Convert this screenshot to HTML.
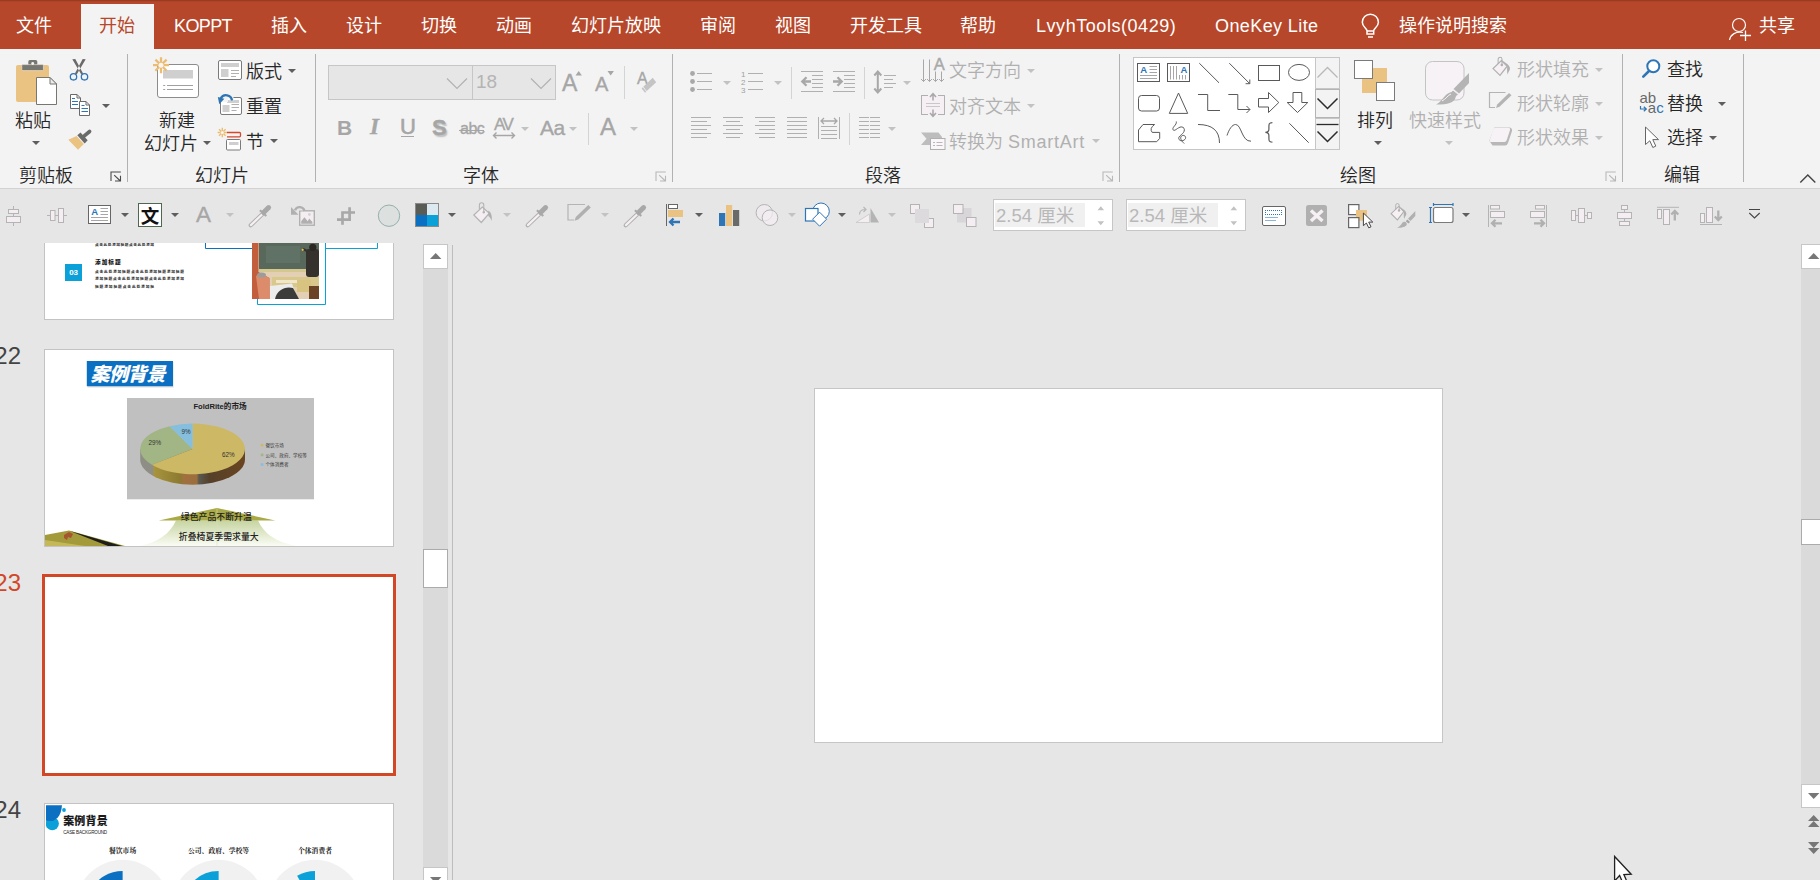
<!DOCTYPE html>
<html lang="zh-CN">
<head>
<meta charset="utf-8">
<title>PowerPoint</title>
<style>
*{box-sizing:border-box;margin:0;padding:0}
html,body{width:1820px;height:880px;overflow:hidden;background:#e6e6e6}
body{position:relative;font-weight:350;font-family:"Liberation Sans","Noto Sans CJK SC",sans-serif;font-size:18px;color:#262626}
.abs{position:absolute}
#tabbar{position:absolute;left:0;top:0;width:1820px;height:49px;background:#b7472a}
#tabbar:before{content:"";position:absolute;left:0;top:0;width:100%;height:2px;background:linear-gradient(#8e3720,#b7472a)}
.tab{position:absolute;top:9px;height:34px;line-height:34px;color:#fff;font-size:18px;white-space:nowrap;font-weight:400}
#tab-home{position:absolute;left:81px;top:4px;width:73px;height:45px;background:#f3f3f3}
#tab-home span{position:absolute;left:18px;top:5px;line-height:34px;color:#b7472a;font-size:18px;font-weight:400}
#ribbon{position:absolute;left:0;top:49px;width:1820px;height:140px;background:#f3f3f3;border-bottom:1px solid #d2d2d2}
.sep{position:absolute;top:54px;width:1px;height:128px;background:#b1b1b1}
.tsep{position:absolute;width:1px;background:#d4d4d4}
.t{position:absolute;white-space:nowrap;line-height:24px;font-size:18px;color:#262626}
.g{color:#b0b0b0}
.glabel{position:absolute;top:113px;white-space:nowrap;line-height:24px;font-size:18px;color:#262626}
.gl{color:#a6a6a6;white-space:nowrap;-webkit-text-stroke:0.35px #a6a6a6}
.dd{position:absolute;width:0;height:0;border-left:4px solid transparent;border-right:4px solid transparent;border-top:4px solid #5e5e5e}
.dd.g{border-top-color:#c2c2c2}
svg{position:absolute;overflow:visible}
.pg{position:absolute;width:1820px;height:880px}
.num{position:absolute;left:-20px;width:41px;text-align:right;font-size:24px;line-height:28px;color:#444;font-weight:400;white-space:nowrap}
.thumb{position:absolute;left:44px;width:350px;background:#fff;border:1px solid #c3c3c3;overflow:hidden}
.sbtn{position:absolute;width:25px;height:24px;background:#fff;border:1px solid #c6c6c6}
.strack{position:absolute;width:25px;background:#dadada}
#qat{position:absolute;left:0;top:189px;width:1820px;height:54px;background:#e6e6e6}
#left{position:absolute;left:0;top:243px;width:453px;height:637px;background:#e6e6e6;overflow:hidden}
#main{position:absolute;left:453px;top:243px;width:1367px;height:637px;background:#e6e6e6;overflow:hidden}
</style>
</head>
<body>
<div id="tabbar">
<div id="tab-home"><span>开始</span></div>
<div class="tab" style="left:16px">文件</div>
<div class="tab" style="left:174px;letter-spacing:-0.600px">KOPPT</div>
<div class="tab" style="left:271px">插入</div>
<div class="tab" style="left:346px">设计</div>
<div class="tab" style="left:421px">切换</div>
<div class="tab" style="left:496px">动画</div>
<div class="tab" style="left:571px">幻灯片放映</div>
<div class="tab" style="left:700px">审阅</div>
<div class="tab" style="left:775px">视图</div>
<div class="tab" style="left:850px">开发工具</div>
<div class="tab" style="left:960px">帮助</div>
<div class="tab" style="left:1036px;letter-spacing:0.550px">LvyhTools(0429)</div>
<div class="tab" style="left:1215px;letter-spacing:0.400px">OneKey Lite</div>
<div class="tab" style="left:1399px">操作说明搜索</div>
<div class="tab" style="left:1759px">共享</div>
<svg style="left:1360px;top:12px" width="22" height="28" viewBox="1360 12 22 28"><path d="M1367 34v-3.200c0-2.300-4.700-4-4.700-8.600a8.050 8.050 0 0 1 16.100 0c0 4.600-4.700 6.300-4.700 8.600V34z" fill="none" stroke="#fff" stroke-width="1.500"/><path d="M1367 31h6.700M1368 37h5" stroke="#fff" stroke-width="1.500"/></svg>
<svg style="left:1727px;top:16px" width="26" height="27" viewBox="1727 16 26 27"><circle cx="1739" cy="25" r="6.500" fill="none" stroke="#fff" stroke-width="1.200"/><path d="M1729.500 40c1-5.500 6.500-9 13.500-7.500" fill="none" stroke="#fff" stroke-width="1.200"/><path d="M1740 35.500h11M1745.500 30.500v10.500" stroke="#fff" stroke-width="1.300"/></svg>

</div>
<div id="ribbon"></div>
<div id="qat"></div>
<div id="rl" style="position:absolute;left:0;top:0;width:1820px;height:243px">
<!-- ===== Clipboard group ===== -->
<svg style="left:14px;top:58px" width="46" height="50" viewBox="14 58 46 50">
<rect x="16" y="65" width="33" height="37" rx="2" fill="#eac282"/>
<rect x="28.300" y="60.100" width="9" height="7" rx="1.600" fill="#777772"/>
<rect x="21.800" y="64.600" width="21.600" height="6" rx="1" fill="#777772" stroke="#f3ead8" stroke-width="0.600"/>
<circle cx="32.700" cy="63.500" r="1.400" fill="#f3f3f3"/>
<path d="M36.500 77.500h13.500l6.500 6.500v20.500h-20z" fill="#fff" stroke="#777772" stroke-width="1"/>
<path d="M50 77.500v6.500h6.500z" fill="#ececec" stroke="#777772" stroke-width="1" stroke-linejoin="round"/>
</svg>
<div class="t" style="left:15px;top:109px">粘贴</div>
<div class="dd" style="left:32px;top:141px"></div>
<!-- scissors -->
<svg style="left:68px;top:58px" width="24" height="24" viewBox="68 58 24 24">
<path d="M72.300 59.300l3-0.300 7.800 14.500-1.800 1zM85.700 59.300l-3-0.300-7.800 14.500 1.800 1z" fill="#6a6a6a"/>
<circle cx="73.500" cy="76.800" r="3.200" fill="none" stroke="#2f75b5" stroke-width="1.300"/>
<circle cx="84.500" cy="76.800" r="3.200" fill="none" stroke="#2f75b5" stroke-width="1.300"/>
</svg>
<!-- copy -->
<svg style="left:68px;top:92px" width="26" height="26" viewBox="68 92 26 26">
<path d="M70.500 94.500h6.500l3.500 3.500v10.500h-10z" fill="#fff" stroke="#6a6a6a"/>
<path d="M77 94.500v3.500h3.500" fill="none" stroke="#6a6a6a"/>
<path d="M72 98.500h3M72 101.500h6M72 104.500h6" stroke="#2f75b5" stroke-width="1"/>
<path d="M79.500 101.500h6.500l3.500 3.500v10.500h-10z" fill="#fff" stroke="#6a6a6a"/>
<path d="M86 101.500v3.500h3.500" fill="none" stroke="#6a6a6a"/>
<path d="M81.500 105.500h3M81.500 108.500h6.500M81.500 111.500h6.500" stroke="#2f75b5" stroke-width="1"/>
</svg>
<div class="dd" style="left:102px;top:104px"></div>
<!-- format painter -->
<svg style="left:66px;top:128px" width="28" height="24" viewBox="66 128 28 24">
<path d="M68.300 139.800l8.200-3.800 7.300 8-5.800 5.800z" fill="#eac282"/>
<path d="M77.300 135.300l3.200-2.800 7.200 7.700-3 3.300z" fill="#6a6a6a"/>
<path d="M84 136.200l5.600-4.700" stroke="#6a6a6a" stroke-width="3.600" stroke-linecap="round"/>
</svg>
<div class="glabel" style="left:19px;top:164px">剪贴板</div>
<svg class="launch" style="left:110px;top:171px" width="12" height="11" viewBox="0 0 12 11"><path d="M1 10V1h9.800M4.200 4.200l6.200 5.800M10.500 4.800v5.200h-5.500" fill="none" stroke="#4a4a4a" stroke-width="1.100"/></svg>
<div class="sep" style="left:127px"></div>

<!-- ===== Slides group ===== -->
<svg style="left:150px;top:55px" width="52" height="46" viewBox="150 55 52 46">
<rect x="157.500" y="64.500" width="41" height="33" rx="2.500" fill="#fff" stroke="#8c8c8c" stroke-width="1"/>
<rect x="163" y="70" width="30" height="8.500" fill="#cfcfcf"/>
<path d="M163.200 85.500h2M167 85.500h26M163.200 89.500h2M167 89.500h26" stroke="#a0a0a0" stroke-width="1"/>
<g stroke="#ebbd73" stroke-width="2.300" stroke-linecap="butt"><path d="M161 57.200v16M153 65.200h16M155.400 59.600l11.200 11.200M166.600 59.600l-11.200 11.200"/></g>
<circle cx="161" cy="65.200" r="2.500" fill="#fbf4f1"/>
</svg>
<div class="t" style="left:159px;top:109px">新建</div>
<div class="t" style="left:144px;top:132px">幻灯片</div>
<div class="dd" style="left:203px;top:141px"></div>
<!-- layout -->
<svg style="left:217px;top:59px" width="26" height="22" viewBox="217 59 26 22">
<rect x="218.500" y="60.500" width="23" height="19" rx="1.500" fill="#fff" stroke="#7a7a7a"/>
<rect x="221" y="63" width="18" height="4" fill="#cfcfcf"/>
<rect x="221" y="69" width="7.500" height="8" fill="#cfcfcf"/>
<path d="M231 70.500h8M231 73.500h8M231 76.500h5" stroke="#b0b0b0"/>
</svg>
<div class="t" style="left:246px;top:60px">版式</div>
<div class="dd" style="left:288px;top:69px"></div>
<!-- reset -->
<svg style="left:216px;top:93px" width="28" height="24" viewBox="216 93 28 24">
<rect x="220.500" y="97.500" width="21" height="17" rx="1.500" fill="#fff" stroke="#7a7a7a"/>
<rect x="227" y="100" width="12" height="3" fill="#cfcfcf"/>
<rect x="222.500" y="105" width="7" height="7" fill="#cfcfcf"/>
<path d="M231.500 104.500h7.500M231.500 107.500h7.500M231.500 110.500h5" stroke="#b0b0b0"/>
<path d="M217 94h11v8h-11z" fill="#f3f3f3"/>
<path d="M232 100.500a6 6 0 0 0-11.300-2" fill="none" stroke="#f3f3f3" stroke-width="4.500"/>
<path d="M232 100.500a6 6 0 0 0-11.300-2" fill="none" stroke="#2f75b5" stroke-width="2.300"/>
<path d="M217.800 97l6.500 1.800-5 5.400z" fill="#2f75b5"/>
</svg>
<div class="t" style="left:246px;top:95px">重置</div>
<!-- section -->
<svg style="left:216px;top:126px" width="28" height="26" viewBox="216 126 28 26">
<path d="M227 132.500h12.500a1 1 0 0 1 1 1v2.300a1 1 0 0 1-1 1h-12.500" fill="none" stroke="#d9472b" stroke-width="1.300"/>
<rect x="226.500" y="139.500" width="14" height="10.500" rx="1" fill="#fff" stroke="#7a7a7a"/>
<rect x="229" y="142" width="9.500" height="3" fill="#cfcfcf"/>
<g stroke="#ebbd73" stroke-width="1.400"><path d="M222.300 127.800v9.400M217.600 132.500h9.400M219 129.200l6.600 6.600M225.600 129.200l-6.600 6.600"/></g>
<circle cx="222.300" cy="132.500" r="1.600" fill="#fbf4f1"/>
</svg>
<div class="t" style="left:246px;top:130px">节</div>
<div class="dd" style="left:270px;top:139px"></div>
<div class="glabel" style="left:195px;top:164px">幻灯片</div>
<div class="sep" style="left:315px"></div>

<!-- ===== Font group ===== -->
<div class="abs" style="left:328px;top:65px;width:145px;height:35px;background:#e6e6e6;border:1px solid #c6c6c6"></div>
<div class="abs" style="left:472px;top:65px;width:84px;height:35px;background:#e6e6e6;border:1px solid #c6c6c6"></div>
<svg style="left:446px;top:77px" width="22" height="13" viewBox="0 0 22 13"><path d="M1 1.500l10 10 10-10" fill="none" stroke="#b2b2b2" stroke-width="1.200"/></svg>
<svg style="left:530px;top:77px" width="22" height="13" viewBox="0 0 22 13"><path d="M1 1.500l10 10 10-10" fill="none" stroke="#b2b2b2" stroke-width="1.200"/></svg>
<div class="abs" style="left:476px;top:70px;font-size:19px;line-height:24px;color:#b4b4b4;font-weight:400">18</div>
<div class="abs gl" style="left:562px;top:69px;font-size:23px;line-height:28px">A</div>
<svg style="left:575px;top:70px" width="8" height="6" viewBox="0 0 8 6"><path d="M0.500 5.500l3.200-4.500 3.200 4.500z" fill="#a6a6a6"/></svg>
<div class="abs gl" style="left:595px;top:72px;font-size:20px;line-height:24px">A</div>
<svg style="left:607px;top:70px" width="8" height="6" viewBox="0 0 8 6"><path d="M0.500 1l3.200 4.500 3.200-4.500z" fill="#a6a6a6"/></svg>
<div class="tsep" style="left:624px;top:66px;height:33px"></div>
<div class="abs gl" style="left:637px;top:68px;font-size:16px;line-height:22px">A</div>
<svg style="left:640px;top:76px" width="18" height="18" viewBox="640 76 18 18"><path d="M643.300 86.800l9.400-9 3.500 4.500-9.500 8.700z" fill="#c4c4c4"/><path d="M641.600 88.400l1.200-1.100 3.500 4.400-1.200 1.100z" fill="#c4c4c4"/></svg>
<div class="abs gl" style="left:337px;top:114px;font-size:21px;line-height:28px;font-weight:700;-webkit-text-stroke:0">B</div>
<div class="abs gl" style="left:370px;top:113px;font-size:23px;line-height:28px;font-weight:700;font-style:italic;font-family:'Liberation Serif',serif">I</div>
<div class="abs gl" style="left:400px;top:113px;font-size:22px;line-height:28px;font-weight:400;-webkit-text-stroke:0.600px #a6a6a6;letter-spacing:0">U</div>
<div class="abs" style="left:401px;top:136px;width:13px;height:1px;background:#a6a6a6"></div>
<div class="abs gl" style="left:432px;top:114px;font-size:22px;line-height:28px;font-weight:700;text-shadow:1.500px 1.500px 1.500px #bdbdbd">S</div>
<div class="abs gl" style="left:460px;top:117px;font-size:16px;line-height:24px;letter-spacing:-0.500px;font-weight:400">abc</div>
<div class="abs" style="left:459px;top:130px;width:25px;height:1px;background:#a6a6a6"></div>
<div class="abs gl" style="left:494px;top:114px;font-size:17px;line-height:22px;letter-spacing:-1.500px;font-weight:400">AV</div>
<svg style="left:492px;top:131px" width="24" height="9" viewBox="0 0 24 9"><path d="M1.500 4.500h21M4.500 1.500l-3 3 3 3M19.500 1.500l3 3-3 3" fill="none" stroke="#a6a6a6" stroke-width="1.400"/></svg>
<div class="dd g" style="left:521px;top:127px"></div>
<div class="abs gl" style="left:540px;top:115px;font-size:21px;line-height:26px;letter-spacing:-0.500px;font-weight:400">Aa</div>
<div class="dd g" style="left:569px;top:127px"></div>
<div class="tsep" style="left:588px;top:113px;height:32px"></div>
<div class="abs gl" style="left:600px;top:112px;font-size:24px;line-height:30px;font-weight:400">A</div>
<div class="dd g" style="left:630px;top:127px"></div>
<div class="glabel" style="left:463px;top:164px">字体</div>
<svg class="launch" style="left:655px;top:171px" width="12" height="11" viewBox="0 0 12 11"><path d="M1 10V1h9.800M4.200 4.200l6.200 5.800M10.500 4.800v5.200h-5.500" fill="none" stroke="#b8b8b8" stroke-width="1.100"/></svg>
<div class="sep" style="left:672px"></div>

<!-- ===== Paragraph group ===== -->
<svg style="left:688px;top:68px" width="26" height="26" viewBox="688 68 26 26"><circle cx="692.500" cy="73.5" r="2.400" fill="#a8a8a8"/><circle cx="692.500" cy="81.5" r="2.400" fill="#a8a8a8"/><circle cx="692.500" cy="89.5" r="2.400" fill="#a8a8a8"/><path d="M697 73.5H712M697 81.5H712M697 89.5H712" stroke="#b0b0b0" stroke-width="1" fill="none"/></svg>
<div class="dd g" style="left:723px;top:81px"></div>
<svg style="left:738px;top:68px" width="26" height="26" viewBox="738 68 26 26"><text x="741" y="76.5" font-size="8" font-family="Liberation Sans,sans-serif" fill="#a0a0a0">1</text><text x="741" y="84.5" font-size="8" font-family="Liberation Sans,sans-serif" fill="#a0a0a0">2</text><text x="741" y="92.5" font-size="8" font-family="Liberation Sans,sans-serif" fill="#a0a0a0">3</text><path d="M748 73.5H763M748 81.5H763M748 89.5H763" stroke="#b0b0b0" stroke-width="1" fill="none"/></svg>
<div class="dd g" style="left:774px;top:81px"></div>
<div class="tsep" style="left:791px;top:67px;height:32px"></div>
<svg style="left:799px;top:68px" width="26" height="26" viewBox="799 68 26 26"><path d="M801 71.5H823M801 91.5H823M812 75.5H823M812 79.5H823M812 83.5H823M812 87.5H823" stroke="#b0b0b0" stroke-width="1" fill="none"/><path d="M803 81.500h8M806.500 77.300l-4.200 4.200 4.200 4.200" stroke="#a8a8a8" stroke-width="2.300" fill="none"/></svg>
<svg style="left:831px;top:68px" width="26" height="26" viewBox="831 68 26 26"><path d="M833 71.5H855M833 91.5H855M844 75.5H855M844 79.5H855M844 83.5H855M844 87.5H855" stroke="#b0b0b0" stroke-width="1" fill="none"/><path d="M833 81.500h8M837.500 77.300l4.200 4.200-4.200 4.200" stroke="#a8a8a8" stroke-width="2.300" fill="none"/></svg>
<div class="tsep" style="left:864px;top:67px;height:32px"></div>
<svg style="left:872px;top:68px" width="26" height="28" viewBox="872 68 26 28"><path d="M884 75.5H896M884 79.5H893M884 83.5H896M884 87.5H893" stroke="#b0b0b0" stroke-width="1" fill="none"/><path d="M877.800 72v20M874.300 75.500l3.500-4 3.500 4M874.300 88.500l3.500 4 3.500-4" stroke="#a8a8a8" stroke-width="2" fill="none"/></svg>
<div class="dd g" style="left:903px;top:81px"></div>
<svg style="left:689px;top:114px" width="24" height="26" viewBox="689 114 24 26"><path d="M691 117.5H711M691 121.5H707M691 125.5H711M691 129.5H707M691 133.5H711M691 137.5H707" stroke="#b0b0b0" stroke-width="1" fill="none"/></svg>
<svg style="left:721px;top:114px" width="24" height="26" viewBox="721 114 24 26"><path d="M723 117.5H743M726 121.5H740M723 125.5H743M726 129.5H740M723 133.5H743M726 137.5H740" stroke="#b0b0b0" stroke-width="1" fill="none"/></svg>
<svg style="left:753px;top:114px" width="24" height="26" viewBox="753 114 24 26"><path d="M755 117.5H775M759 121.5H775M755 125.5H775M759 129.5H775M755 133.5H775M759 137.5H775" stroke="#b0b0b0" stroke-width="1" fill="none"/></svg>
<svg style="left:785px;top:114px" width="24" height="26" viewBox="785 114 24 26"><path d="M787 117.5H807M787 121.5H807M787 125.5H807M787 129.5H807M787 133.5H807M787 137.5H807" stroke="#b0b0b0" stroke-width="1" fill="none"/></svg>
<svg style="left:816px;top:114px" width="26" height="27" viewBox="816 114 26 27"><path d="M818.500 117v22M839.500 117v22" stroke="#b0b0b0" stroke-width="1"/><path d="M821 121h16M824 118l-3 3 3 3M834 118l3 3-3 3" stroke="#a8a8a8" stroke-width="1.300" fill="none"/><path d="M821 126.5H837M821 130.5H837M821 134.5H837M821 138.5H837" stroke="#b0b0b0" stroke-width="1" fill="none"/></svg>
<div class="tsep" style="left:849px;top:113px;height:32px"></div>
<svg style="left:857px;top:114px" width="26" height="26" viewBox="857 114 26 26"><path d="M859 117.5H869M859 121.5H869M859 125.5H869M859 129.5H869M859 133.5H869M859 137.5H869M870 117.5H880M870 121.5H880M870 125.5H880M870 129.5H880M870 133.5H880M870 137.5H880" stroke="#b0b0b0" stroke-width="1" fill="none"/></svg>
<div class="dd g" style="left:888px;top:127px"></div>
<svg style="left:920px;top:57px" width="28" height="27" viewBox="920 57 28 27"><path d="M923.500 59.500v22M929.500 59.500v22M935.500 71.500v10M941.500 71.500v10" stroke="#a8a8a8" stroke-width="1"/><path d="M921 79l2.500 2.500 2.500-2.500" stroke="#a8a8a8" stroke-width="1" fill="none"/><path d="M927.0 79l2.500 2.500 2.500-2.500" stroke="#a8a8a8" stroke-width="1" fill="none"/><path d="M933.0 79l2.500 2.500 2.500-2.500" stroke="#a8a8a8" stroke-width="1" fill="none"/><path d="M939.0 79l2.500 2.500 2.500-2.500" stroke="#a8a8a8" stroke-width="1" fill="none"/><text x="933.800" y="70" font-size="16.500" font-family="Liberation Sans,sans-serif" fill="#a8a8a8" stroke="#a8a8a8" stroke-width="0.400">A</text></svg>
<div class="t g" style="left:949px;top:59px">文字方向</div>
<div class="dd g" style="left:1027px;top:69px"></div>
<svg style="left:920px;top:92px" width="27" height="26" viewBox="920 92 27 26"><path d="M928 95.500h-6.500v19h6.500M938 95.500h6.500v19h-6.500" fill="#f6f0f4" stroke="#b0b0b0" stroke-width="1"/><rect x="922" y="96" width="22" height="18" fill="#f6f0f4"/><path d="M928 95.500h-6.500v19h6.500M938 95.500h6.500v19h-6.500" fill="none" stroke="#b0b0b0" stroke-width="1"/><path d="M933 94v6.500M930 97l3-3.300 3 3.300M933 109.500v6.500M930 113l3 3.300 3-3.300" stroke="#a8a8a8" stroke-width="1.500" fill="none"/><path d="M926 103.5H940M926 106.5H940" stroke="#c8c8c8" stroke-width="1" fill="none"/></svg>
<div class="t g" style="left:949px;top:95px">对齐文本</div>
<div class="dd g" style="left:1027px;top:104px"></div>
<svg style="left:920px;top:131px" width="27" height="20" viewBox="920 131 27 20"><path d="M921 132.500h17.500l3.500 4.500v8h-21l5.500-6.300z" fill="#bdbdbd"/><rect x="930.500" y="138.500" width="14.500" height="11" fill="#faf6f9" stroke="#b0b0b0"/><path d="M933 142.5H935M936.5 142.5H942.5M933 145.5H935M936.5 145.5H942.5" stroke="#b8b8b8" stroke-width="1" fill="none"/></svg>
<div class="t g" style="left:949px;top:130px">转换为 <span style="letter-spacing:0.750px">SmartArt</span></div>
<div class="dd g" style="left:1092px;top:139px"></div>
<div class="glabel" style="left:865px;top:164px">段落</div>
<svg class="launch" style="left:1102px;top:171px" width="12" height="11" viewBox="0 0 12 11"><path d="M1 10V1h9.800M4.200 4.200l6.200 5.800M10.500 4.800v5.200h-5.500" fill="none" stroke="#b8b8b8" stroke-width="1.100"/></svg>
<div class="sep" style="left:1119px"></div>

<!-- ===== Drawing group ===== -->
<div class="abs" style="left:1133px;top:57px;width:207px;height:93px;background:#fff;border:1px solid #c6c6c6"></div>
<div class="abs" style="left:1315px;top:57px;width:25px;height:32px;background:#f3f3f3;border:1px solid #c6c6c6"></div>
<div class="abs" style="left:1315px;top:89px;width:25px;height:29px;background:#f3f3f3;border:1px solid #b4b4b4"></div>
<div class="abs" style="left:1315px;top:118px;width:25px;height:32px;background:#f3f3f3;border:1px solid #c6c6c6"></div>
<svg style="left:1315px;top:57px" width="25" height="93" viewBox="1315 57 25 93"><path d="M1317.500 77.500l10-10 10 10" fill="none" stroke="#b8b8b8" stroke-width="1.300"/><path d="M1317.500 98.500l10 10 10-10" fill="none" stroke="#2b2b2b" stroke-width="1.500"/><path d="M1316.500 124.500h22" fill="none" stroke="#2b2b2b" stroke-width="1.300"/><path d="M1317.500 131.500l10 10 10-10" fill="none" stroke="#2b2b2b" stroke-width="1.500"/></svg>
<svg style="left:1134px;top:58px" width="181" height="91" viewBox="1134 58 181 91"><rect x="1137.500" y="63.500" width="22" height="18" fill="#fff" stroke="#595959"/><text x="1140.300" y="73" font-size="9.500" font-weight="700" font-family="Liberation Sans,sans-serif" fill="#2e75b6">A</text><path d="M1149.500 66.500h7.500M1149.500 69.500h7.500M1149.500 72.500h7.500M1140 75.500h17M1140 78.500h17" stroke="#a6a6a6"/><rect x="1167.500" y="63.500" width="22" height="18" fill="#fff" stroke="#595959"/><text x="1180.500" y="73" font-size="9.500" font-weight="700" font-family="Liberation Sans,sans-serif" fill="#2e75b6">A</text><path d="M1170.500 66v13.500M1173.500 66v13.500M1176.500 66v13.500M1179.500 75v4.500M1182.500 75v4.500M1185.500 75v4.500" stroke="#a6a6a6"/><path d="M1199.300 63.200L1219 82.800" stroke="#595959" fill="none"/><path d="M1229.300 63.200L1249.800 83.700M1249.800 79.500v4.200h-4.200" stroke="#595959" fill="none"/><rect x="1258.500" y="65.500" width="21" height="15" fill="none" stroke="#595959"/><ellipse cx="1299" cy="72.400" rx="10.500" ry="8" fill="none" stroke="#595959"/><rect x="1138.500" y="95.500" width="21" height="15.500" rx="3" fill="none" stroke="#595959"/><path d="M1178.500 93l9.200 20.400h-18.400z" fill="none" stroke="#595959"/><path d="M1198 94.500h9.700v16h12.300" fill="none" stroke="#595959"/><path d="M1228.300 94.500h9.500v15h12M1246.500 106l3.500 3.500-3.500 3.500" fill="none" stroke="#595959"/><path d="M1258.500 98.500h10v-6l10.300 10-10.300 10v-5.500h-10z" fill="none" stroke="#595959"/><path d="M1293 92.500h8.800v10h6l-10.300 10-10.300-10h5.800z" fill="none" stroke="#595959"/><path d="M1138.500 130l4.500-5.500h11.600q-5.500 4 -2.400 7.900h7.500v6l-3 3.300h-18.200z" fill="none" stroke="#595959"/><path d="M1176.300 121.500C1177 125 1172 127 1173 129.500C1174 132.500 1178 127 1181.200 126.900C1184 127 1185 129 1184 131.500C1183 134.500 1178 136 1178.800 138.800C1179.500 141.500 1184 141.500 1185.500 138.500C1186.300 136 1183.500 134.500 1181.500 136C1179.500 138 1181.500 141 1184.200 143.500" fill="none" stroke="#595959"/><path d="M1198 124.500q21.500 0 21.500 18.500" fill="none" stroke="#595959"/><path d="M1227 135.500c2-6 5-11 8.600-11 6 0 6 17.200 15.400 16.700" fill="none" stroke="#595959"/><path d="M1272.400 122.700c-3.500 0-3.500 1.500-3.500 4v2.500c0 2-1 3-3.500 3.200 2.500 0.200 3.500 1.200 3.500 3.200v2.500c0 2.500 0 4 3.500 4" fill="none" stroke="#595959" stroke-width="1.200"/><path d="M1289.400 123.300L1308.700 142.700" stroke="#595959" fill="none"/></svg>
<svg style="left:1353px;top:59px" width="44" height="44" viewBox="1353 59 44 44"><rect x="1362" y="68" width="25" height="25" fill="#eac282"/><rect x="1354.500" y="60.500" width="18" height="18" fill="#fff" stroke="#7a7a7a"/><rect x="1376.500" y="82.500" width="18" height="18" fill="#fff" stroke="#7a7a7a"/></svg>
<div class="t" style="left:1357px;top:109px">排列</div>
<div class="dd" style="left:1374px;top:141px"></div>
<svg style="left:1424px;top:60px" width="48" height="46" viewBox="1424 60 48 46"><rect x="1425.500" y="61.500" width="38.500" height="38.500" rx="7" fill="#f6f2f5" stroke="#c4c4c4"/><path d="M1469 73v10l-10 10.500-5.500-4.500z" fill="#b4b4b4"/><path d="M1453 90l5.300 4.300-3 3.200-5.300-4.300z" fill="#b4b4b4" stroke="#f6f2f5" stroke-width="1"/><path d="M1436 104.500c6-3 8-10 14-12 4-1 7 3 5 6.500-2 3.500-6 5.500-19 5.500z" fill="#b4b4b4"/><path d="M1442 101c4-2 6-6 9-7" fill="none" stroke="#f6f2f5" stroke-width="1"/></svg>
<div class="t g" style="left:1409px;top:109px">快速样式</div>
<div class="dd g" style="left:1445px;top:141px"></div>
<svg style="left:1491px;top:56px" width="22" height="22" viewBox="1491 56 22 22"><g transform="translate(1492.5 57.4) scale(0.94)"><path d="M9.500 3.300l6.100 6.100-7.600 9.800-7.400-7.300z" fill="#f6f0f4" stroke="#b0b0b0" stroke-width="1.300"/><path d="M6 7v-5a2.050 2.050 0 0 1 4.100 0v6" fill="none" stroke="#b0b0b0" stroke-width="1.100"/><circle cx="9.900" cy="8.100" r="1.400" fill="#b0b0b0"/><path d="M10.700 3.300L16 7.400C18 9 18.800 11 18.500 12.500C18 14.500 16.500 16 16 18.200C15.300 15 15.500 12 15.600 9.800z" fill="#b0b0b0"/></g></svg>
<div class="t g" style="left:1517px;top:58px">形状填充</div>
<div class="dd g" style="left:1595px;top:68px"></div>
<svg style="left:1488px;top:91px" width="25" height="19" viewBox="1488 91 25 19"><path d="M1505.500 92.500h-16v15h5.500" fill="none" stroke="#b4b4b4" stroke-width="1.200"/><path d="M1509 93l2.500 2.300-12 11.500-3.500 1.200 1.200-3.500z" fill="#b4b4b4"/></svg>
<div class="t g" style="left:1517px;top:92px">形状轮廓</div>
<div class="dd g" style="left:1595px;top:102px"></div>
<svg style="left:1488px;top:126px" width="26" height="22" viewBox="1488 126 26 22"><path d="M1494.500 127.500h14.500q3.500 0 3 3.500l-4 12q-0.800 2.500-3 2.500h-12.500l-3.200-4.700z" fill="#b8b8b8"/><path d="M1495.500 127.800h12.500q2.500 0 2 2.300l-3.300 10.200q-0.600 1.700-2.300 1.700h-13.800q-1.500 0-1-1.700l3.600-10.500q0.600-2 2.300-2z" fill="#f6f2f5"/></svg>
<div class="t g" style="left:1517px;top:126px">形状效果</div>
<div class="dd g" style="left:1595px;top:136px"></div>
<div class="glabel" style="left:1340px;top:164px">绘图</div>
<svg class="launch" style="left:1605px;top:171px" width="12" height="11" viewBox="0 0 12 11"><path d="M1 10V1h9.800M4.200 4.200l6.200 5.800M10.500 4.800v5.200h-5.500" fill="none" stroke="#b8b8b8" stroke-width="1.100"/></svg>
<div class="sep" style="left:1622px"></div>

<!-- ===== Editing group ===== -->
<svg style="left:1640px;top:58px" width="22" height="22" viewBox="1640 58 22 22"><path d="M1649 71l-5.700 5.700" stroke="#2e75b6" stroke-width="2.600" stroke-linecap="round"/><circle cx="1653.300" cy="66.300" r="6" fill="#fff" stroke="#2e75b6" stroke-width="2"/></svg>
<div class="t" style="left:1667px;top:58px">查找</div>
<svg style="left:1638px;top:92px" width="26" height="22" viewBox="1638 92 26 22"><text x="1639.500" y="102.700" font-size="15" font-family="Liberation Sans,sans-serif" fill="#6a6a6a">ab</text><text x="1647.800" y="113" font-size="15" font-family="Liberation Sans,sans-serif" fill="#6a6a6a">a<tspan fill="#2e75b6">c</tspan></text><path d="M1640.500 106v3h5.500M1643.800 106.700l2.500 2.300-2.500 2.300" fill="none" stroke="#2e75b6" stroke-width="1.200"/></svg>
<div class="t" style="left:1667px;top:92px">替换</div>
<div class="dd" style="left:1718px;top:102px"></div>
<svg style="left:1644px;top:125px" width="17" height="24" viewBox="1644 125 17 24"><path d="M1645.500 127v17.500l4.300-3.700 3 6.700 3-1.400-3-6.500h5.700z" fill="#fff" stroke="#666" stroke-width="1" stroke-linejoin="miter"/></svg>
<div class="t" style="left:1667px;top:126px">选择</div>
<div class="dd" style="left:1709px;top:136px"></div>
<div class="glabel" style="left:1664px;top:163px">编辑</div>
<div class="sep" style="left:1743px"></div>
<svg style="left:1799px;top:173px" width="18" height="11" viewBox="0 0 18 11"><path d="M1.300 9.500l7.500-7.500 7.500 7.500" fill="none" stroke="#444" stroke-width="1.400"/></svg>


<!-- ===== QAT ===== -->
<svg style="left:5px;top:205px" width="18" height="22" viewBox="5 205 18 22"><path d="M13.500 206v20" stroke="#b4b4b4"/><rect x="8.500" y="209.500" width="10" height="4" fill="#f4eef2" stroke="#b4b4b4"/><rect x="6.500" y="216.500" width="14" height="6" fill="#f4eef2" stroke="#b4b4b4"/></svg>
<svg style="left:46px;top:207px" width="22" height="17" viewBox="46 207 22 17"><path d="M47 215.500h20" stroke="#b4b4b4"/><rect x="50.500" y="210.500" width="4.500" height="10" fill="#f4eef2" stroke="#b4b4b4"/><rect x="58.500" y="208.500" width="5" height="14" fill="#f4eef2" stroke="#b4b4b4"/></svg>
<svg style="left:88px;top:205px" width="23" height="19" viewBox="88 205 23 19"><rect x="88.500" y="205.500" width="22" height="18" fill="#fff" stroke="#666"/><text x="91.300" y="215.300" font-size="9.500" font-weight="700" font-family="Liberation Sans,sans-serif" fill="#2e75b6">A</text><path d="M100.500 208.500h7.500M100.500 211.500h7.500M100.500 214.500h7.500M91 217.500h17M91 220.500h17" stroke="#a6a6a6"/></svg>
<div class="dd" style="left:121px;top:213px"></div>
<div class="abs" style="left:138px;top:203px;width:24px;height:24px;background:#fff;border:1px solid #4f6650"></div>
<div class="abs" style="left:139px;top:203.500px;width:22px;height:26px;line-height:26px;font-size:18.500px;font-weight:700;color:#111;text-align:center">文</div>
<div class="dd" style="left:171px;top:213px"></div>
<div class="abs gl" style="left:196px;top:200px;font-size:22.500px;line-height:30px;font-weight:400">A</div>
<div class="dd g" style="left:226px;top:213px"></div>
<svg style="left:249px;top:204px" width="23" height="24" viewBox="249 204 23 24"><path d="M262.0 214.500L250.7 225.300" stroke="#b0b0b0" stroke-width="4.200" stroke-linecap="round"/><path d="M262.3 214.200L250.9 225.100" stroke="#f6f0f4" stroke-width="2.200" stroke-linecap="round"/><path d="M263.6 212.600L268.6 207.600" stroke="#a8a8a8" stroke-width="5" stroke-linecap="round"/><path d="M259.9 210.200L266.3 216" stroke="#a8a8a8" stroke-width="2.100"/></svg>
<svg style="left:290px;top:204px" width="26" height="23" viewBox="290 204 26 23"><rect x="299.700" y="210.800" width="14.600" height="14.400" fill="#f4eef2" stroke="#b0b0b0" stroke-width="1.400"/><path d="M301.200 223.800v-2.500l3.200-4 3.400 4 1.400-2.800 3.200 3.500v1.800z" fill="#b0b0b0"/><circle cx="309.400" cy="214.500" r="1.400" fill="#d4d4d4"/><path d="M291 204h13.500v6.500h-5.500v5h-8z" fill="#e6e6e6"/><path d="M304.500 211a5 5 0 0 0-9.500-0.800" fill="none" stroke="#b0b0b0" stroke-width="2.400"/><path d="M291 207v7.800h7.500z" fill="#b0b0b0"/></svg>
<svg style="left:336px;top:206px" width="20" height="20" viewBox="336 206 20 20"><path d="M342.500 211.200V224.700M349.600 207.200V221M341.200 212.500H355M337 219.600H351" stroke="#a8a8a8" stroke-width="2.700" fill="none"/></svg>
<svg style="left:377px;top:204px" width="24" height="24" viewBox="377 204 24 24"><circle cx="389" cy="215.700" r="10.700" fill="#dce0de" stroke="#7fa3a0" stroke-width="0.800"/></svg>
<svg style="left:415px;top:203px" width="24" height="24" viewBox="415 203 24 24"><rect x="415.500" y="203.500" width="23" height="23" fill="#fff" stroke="#8a8a8a"/><rect x="416" y="204" width="11" height="11" fill="#5a5c56"/><rect x="427" y="204" width="11" height="11" fill="#dde9f1"/><rect x="416" y="215" width="11" height="11" fill="#0b70c1"/><rect x="427" y="215" width="11" height="11" fill="#0ba1d8"/></svg>
<div class="dd" style="left:448px;top:213px"></div>
<svg style="left:473px;top:202px" width="21" height="22" viewBox="473 202 21 22"><g transform="translate(473.5 202.5)"><path d="M8.800 4.500l7 6.200-8 9.300-7.500-7.500z" fill="#f4eef2" stroke="#b4b4b4" stroke-width="1.200"/><path d="M10.300 10v-7.500a2.200 2.200 0 0 0-4.400 0v4" fill="none" stroke="#b4b4b4" stroke-width="1.100"/><circle cx="10.300" cy="9.800" r="1.200" fill="#b4b4b4"/><path d="M14.800 8c2.800 1.500 4.200 5.500 3.300 10.500c-1-3-2-4-3.300-5z" fill="#b0b0b0"/></g></svg>
<div class="dd g" style="left:503px;top:213px"></div>
<svg style="left:526px;top:204px" width="23" height="24" viewBox="526 204 23 24"><path d="M539.0 214.500L527.7 225.300" stroke="#b0b0b0" stroke-width="4.200" stroke-linecap="round"/><path d="M539.3 214.200L527.9 225.100" stroke="#f6f0f4" stroke-width="2.200" stroke-linecap="round"/><path d="M540.6 212.600L545.6 207.600" stroke="#a8a8a8" stroke-width="5" stroke-linecap="round"/><path d="M536.9 210.200L543.3 216" stroke="#a8a8a8" stroke-width="2.100"/></svg>
<svg style="left:567px;top:203px" width="25" height="19" viewBox="567 203 25 19"><path d="M585 204.500h-17v15.500h6" fill="none" stroke="#b4b4b4" stroke-width="1.200"/><path d="M588.300 205l2.500 2.500-12.500 12-3.800 1.300 1.300-3.800z" fill="#b0b0b0"/></svg>
<div class="dd g" style="left:601px;top:213px"></div>
<svg style="left:624px;top:204px" width="23" height="24" viewBox="624 204 23 24"><path d="M637.0 214.500L625.7 225.300" stroke="#b0b0b0" stroke-width="4.200" stroke-linecap="round"/><path d="M637.3 214.200L625.9 225.100" stroke="#f6f0f4" stroke-width="2.200" stroke-linecap="round"/><path d="M638.6 212.600L643.6 207.600" stroke="#a8a8a8" stroke-width="5" stroke-linecap="round"/><path d="M634.9 210.200L641.3 216" stroke="#a8a8a8" stroke-width="2.100"/></svg>
<svg style="left:666px;top:203px" width="18" height="24" viewBox="666 203 18 24"><path d="M666.500 204v22" stroke="#666"/><rect x="668.500" y="204.500" width="9" height="4" fill="#fff" stroke="#666"/><rect x="668" y="210" width="15" height="7" fill="#eac282"/><path d="M670 222h10M673.500 218.500l-3.500 3.500 3.500 3.500" fill="none" stroke="#2e75b6" stroke-width="2.300"/></svg>
<div class="dd" style="left:695px;top:213px"></div>
<svg style="left:719px;top:204px" width="21" height="22" viewBox="719 204 21 22"><rect x="719" y="213" width="6.200" height="13" fill="#2e75b6"/><rect x="726" y="205" width="6.200" height="21" fill="#eac282"/><rect x="733" y="210" width="6.200" height="16" fill="#6a6a6a"/></svg>
<svg style="left:755px;top:203px" width="24" height="24" viewBox="755 203 24 24"><circle cx="764.300" cy="212.700" r="8.200" fill="#eeeaee" stroke="#b4b4b4"/><circle cx="770" cy="217.700" r="7.800" fill="#f4eef2" fill-opacity="0.700" stroke="#b4b4b4"/></svg>
<div class="dd g" style="left:788px;top:213px"></div>
<svg style="left:804px;top:202px" width="27" height="26" viewBox="804 202 27 26"><circle cx="821" cy="211.300" r="8.300" fill="#fff" stroke="#2e75b6" stroke-width="1"/><rect x="805.500" y="208.500" width="12.500" height="12.500" fill="#fff" stroke="#2e75b6" stroke-width="1.200"/><path d="M819.600 212.200l7 7-7 7-7-7z" fill="#fff" stroke="#2e75b6" stroke-width="1"/></svg>
<div class="dd" style="left:838px;top:213px"></div>
<svg style="left:855px;top:206px" width="25" height="18" viewBox="855 206 25 18"><path d="M856 222.500h13.500v-8.500z" fill="#f4eef2" stroke="#c8c8c8" stroke-width="0.800"/><path d="M870.500 208v14.500h8.500z" fill="#b4b4b4"/><path d="M859.500 214.500c0-3.500 2.500-5 6-5M863.500 207l2.500 2.500-2.500 2.500" fill="none" stroke="#b8b8b8" stroke-width="1.200"/></svg>
<div class="dd g" style="left:888px;top:213px"></div>
<svg style="left:910px;top:204px" width="24" height="24" viewBox="910 204 24 24"><rect x="910.500" y="204.500" width="9" height="9" fill="#f4eef2" stroke="#b4b4b4"/><rect x="924.500" y="218.500" width="9" height="9" fill="#f4eef2" stroke="#b4b4b4"/><rect x="915" y="209" width="14" height="14" fill="#dcdadc"/></svg>
<svg style="left:953px;top:204px" width="24" height="23" viewBox="953 204 24 23"><rect x="957" y="208" width="14.500" height="14.500" fill="#d8d6d8"/><rect x="953.500" y="204.500" width="9.500" height="9" fill="#f4eef2" stroke="#b4b4b4"/><rect x="966.500" y="217.500" width="9.500" height="9" fill="#f4eef2" stroke="#b4b4b4"/></svg>
<div class="abs" style="left:993px;top:199px;width:120px;height:32px;background:#fff;border:1px solid #c6c6c6"></div>
<div class="abs" style="left:995px;top:203px;width:90px;height:24px;background:#f0f0f0"></div>
<div class="abs" style="left:996px;top:204px;height:24px;line-height:24px;font-size:18.500px;color:#b8b8b8;font-weight:400;white-space:nowrap">2.54 厘米</div>
<svg style="left:1097px;top:206px" width="8" height="20" viewBox="0 0 8 20"><path d="M0.500 4.300l3.300-4 3.300 4zM0.500 15.300l3.300 4 3.300-4z" fill="#c2c2c2"/></svg>
<div class="abs" style="left:1126px;top:199px;width:120px;height:32px;background:#fff;border:1px solid #c6c6c6"></div>
<div class="abs" style="left:1128px;top:203px;width:90px;height:24px;background:#f0f0f0"></div>
<div class="abs" style="left:1129px;top:204px;height:24px;line-height:24px;font-size:18.500px;color:#b8b8b8;font-weight:400;white-space:nowrap">2.54 厘米</div>
<svg style="left:1230px;top:206px" width="8" height="20" viewBox="0 0 8 20"><path d="M0.500 4.300l3.300-4 3.300 4zM0.500 15.300l3.300 4 3.300-4z" fill="#c2c2c2"/></svg>
<svg style="left:1262px;top:206px" width="24" height="20" viewBox="1262 206 24 20"><rect x="1262.500" y="206.500" width="23" height="19" rx="1.500" fill="#fff" stroke="#666"/><g fill="#2e75b6"><rect x="1265" y="210" width="1" height="1"/><rect x="1265" y="214" width="1" height="1"/><rect x="1267" y="210" width="1" height="1"/><rect x="1267" y="214" width="1" height="1"/><rect x="1269" y="210" width="1" height="1"/><rect x="1269" y="214" width="1" height="1"/><rect x="1271" y="210" width="1" height="1"/><rect x="1271" y="214" width="1" height="1"/><rect x="1273" y="210" width="1" height="1"/><rect x="1273" y="214" width="1" height="1"/><rect x="1275" y="210" width="1" height="1"/><rect x="1275" y="214" width="1" height="1"/><rect x="1277" y="210" width="1" height="1"/><rect x="1277" y="214" width="1" height="1"/><rect x="1279" y="210" width="1" height="1"/><rect x="1279" y="214" width="1" height="1"/><rect x="1281" y="210" width="1" height="1"/><rect x="1281" y="214" width="1" height="1"/><rect x="1265" y="212" width="1" height="1"/><rect x="1281" y="212" width="1" height="1"/></g><path d="M1265 217.500h13M1265 220.500h11" stroke="#8ab4d8"/></svg>
<svg style="left:1306px;top:205px" width="21" height="21" viewBox="1306 205 21 21"><rect x="1306" y="205" width="21" height="21" rx="2.500" fill="#b0b0b0"/><path d="M1311 210.500l11.500 10.500M1322.500 210.500l-11.500 10.500" stroke="#f6f0f4" stroke-width="3.400"/></svg>
<svg style="left:1348px;top:204px" width="26" height="25" viewBox="1348 204 26 25"><rect x="1348.600" y="204.600" width="10.300" height="10" fill="#fff" stroke="#666" stroke-width="1.200"/><rect x="1356" y="210" width="11" height="10.700" fill="#eac282"/><rect x="1348.600" y="217.600" width="10.300" height="10" fill="#fff" stroke="#666" stroke-width="1.200"/><path d="M1363.400 213v12.700l3-2.700 2.300 4.800 2.300-1-2.300-4.700h4.100z" fill="#fff" stroke="#444" stroke-width="1"/></svg>
<svg style="left:1391px;top:203px" width="26" height="26" viewBox="1391 203 26 26"><g transform="translate(1390.6 203.6) scale(0.85)"><path d="M9.500 3.300l6.100 6.100-7.600 9.800-7.400-7.300z" fill="#f6f0f4" stroke="#b0b0b0" stroke-width="1.300"/><path d="M6 7v-5a2.050 2.050 0 0 1 4.100 0v6" fill="none" stroke="#b0b0b0" stroke-width="1.100"/><circle cx="9.900" cy="8.100" r="1.400" fill="#b0b0b0"/><path d="M10.700 3.300L16 7.400C18 9 18.800 11 18.500 12.500C18 14.500 16.500 16 16 18.200C15.300 15 15.500 12 15.600 9.800z" fill="#b0b0b0"/></g><path d="M1415.300 211L1415.300 216L1410.500 221L1408 218.800z" fill="#b0b0b0"/><path d="M1407.300 219.600l2.700 2.400-1.500 1.600-2.700-2.400z" fill="#a4a4a4"/><path d="M1406 222.200c1.500 1.500 1 3.500-1.500 4.500c-2.500 1-5 1-7.500 1c3-1.500 4-3 5-4.500c1-1.500 2.500-2 4-1z" fill="#b0b0b0"/></svg>
<svg style="left:1428px;top:202px" width="27" height="22" viewBox="1428 202 27 22"><rect x="1433.500" y="207.500" width="19.500" height="15" rx="2" fill="#fff" stroke="#7a7a7a" stroke-width="1.200"/><path d="M1433.500 204.500h19.500M1433.500 203v3M1453 203v3M1430.500 207.500v15M1429 207.500h3M1429 222.500h3" stroke="#2e75b6" stroke-width="1.200" fill="none"/></svg>
<div class="dd" style="left:1462px;top:213px"></div>
<svg style="left:1488px;top:204px" width="18" height="24" viewBox="1488 204 18 24"><path d="M1488.500 205v22" stroke="#b4b4b4"/><rect x="1490.500" y="205.500" width="9" height="3.500" fill="#f4eef2" stroke="#b4b4b4"/><rect x="1490.500" y="211.500" width="14" height="6" fill="#f4eef2" stroke="#b4b4b4"/><path d="M1492 223.300h10M1495.500 219.800l-3.500 3.500 3.500 3.500" fill="none" stroke="#b0b0b0" stroke-width="2.300"/></svg>
<svg style="left:1530px;top:204px" width="18" height="24" viewBox="1530 204 18 24"><path d="M1546.500 205v22" stroke="#b4b4b4"/><rect x="1535.500" y="205.500" width="9" height="3.500" fill="#f4eef2" stroke="#b4b4b4"/><rect x="1530.500" y="211.500" width="14" height="6" fill="#f4eef2" stroke="#b4b4b4"/><path d="M1534 223.300h10M1540.500 219.800l3.500 3.500-3.500 3.500" fill="none" stroke="#b0b0b0" stroke-width="2.300"/></svg>
<svg style="left:1571px;top:208px" width="22" height="16" viewBox="1571 208 22 16"><path d="M1575.500 215.500h3M1584.500 215.500h3" stroke="#b4b4b4"/><rect x="1571.500" y="210.500" width="4" height="10" fill="#f4eef2" stroke="#b4b4b4"/><rect x="1578.500" y="208.500" width="6" height="14" fill="#f4eef2" stroke="#b4b4b4"/><rect x="1587.500" y="212.500" width="4" height="6" fill="#f4eef2" stroke="#b4b4b4"/></svg>
<svg style="left:1617px;top:205px" width="16" height="22" viewBox="1617 205 16 22"><path d="M1624.500 209.500v3M1624.500 218.500v3" stroke="#b4b4b4"/><rect x="1621.500" y="205.500" width="6" height="4" fill="#f4eef2" stroke="#b4b4b4"/><rect x="1617.500" y="212.500" width="14" height="6" fill="#f4eef2" stroke="#b4b4b4"/><rect x="1619.500" y="221.500" width="10" height="4" fill="#f4eef2" stroke="#b4b4b4"/></svg>
<svg style="left:1656px;top:206px" width="24" height="20" viewBox="1656 206 24 20"><path d="M1657 207.300h22" stroke="#b4b4b4"/><rect x="1657.500" y="209.500" width="4" height="9" fill="#f4eef2" stroke="#b4b4b4"/><rect x="1663.500" y="209.500" width="6" height="15" fill="#f4eef2" stroke="#b4b4b4"/><path d="M1674.800 220.500v-9M1671.300 214.500l3.500-3.500 3.500 3.500" fill="none" stroke="#b0b0b0" stroke-width="2.300"/></svg>
<svg style="left:1699px;top:206px" width="24" height="20" viewBox="1699 206 24 20"><path d="M1700 224.500h22" stroke="#b4b4b4"/><rect x="1700.500" y="213.500" width="4" height="9" fill="#f4eef2" stroke="#b4b4b4"/><rect x="1706.500" y="207.500" width="6" height="15" fill="#f4eef2" stroke="#b4b4b4"/><path d="M1718.300 210.500v9.500M1714.800 216.500l3.500 3.500 3.500-3.500" fill="none" stroke="#b0b0b0" stroke-width="2.300"/></svg>
<svg style="left:1748px;top:208px" width="13" height="12" viewBox="1748 208 13 12"><path d="M1749 209.500h11M1749.300 213l5.200 5 5.200-5" fill="none" stroke="#444" stroke-width="1.100"/></svg>

</div>
<div id="left"><div class="pg" style="left:0;top:-243px">
<div class="strack" style="left:423px;top:244px;height:636px"></div>
<div class="sbtn" style="left:423px;top:244px;height:25px"></div>
<svg style="left:430px;top:253px" width="12" height="6" viewBox="0 0 12 6"><path d="M0 6l5.700-6 5.700 6z" fill="#777"/></svg>
<div class="sbtn" style="left:423px;top:549px;height:39px;border-color:#ababab"></div>
<div class="sbtn" style="left:423px;top:867px"></div>
<svg style="left:430px;top:877px" width="12" height="6" viewBox="0 0 12 6"><path d="M0 0l5.700 6 5.700-6z" fill="#777"/></svg>
<div class="abs" style="left:452px;top:245px;width:1px;height:635px;background:#bdbdbd"></div>
<div class="num" style="top:342px">22</div>
<div class="num" style="top:569px;color:#d24726">23</div>
<div class="num" style="top:796px">24</div>
<div class="thumb" style="top:242px;height:78px;border-top:none">
<svg style="left:0;top:0" width="350" height="78" viewBox="45 242 350 78">
<path d="M205.500 242v6.500h47" fill="none" stroke="#0b70c1" stroke-width="1"/>
<path d="M377.500 242v6.500h-52" fill="none" stroke="#0ba1d8" stroke-width="1"/>
<path d="M325.500 242v62.500h-68v-6" fill="none" stroke="#0ba1d8" stroke-width="1"/>
<clipPath id="clph"><rect x="252" y="242" width="67" height="57"/></clipPath>
<g clip-path="url(#clph)">
<rect x="252" y="242" width="67" height="57" fill="#e2cfb4"/>
<rect x="259" y="242" width="60" height="27" fill="#58695c"/>
<rect x="266" y="246" width="34" height="17" fill="#64756a" opacity="0.700"/>
<rect x="259" y="269" width="60" height="3" fill="#d4c890"/>
<rect x="272" y="277" width="47" height="10" fill="#d9c88c"/>
<rect x="276" y="280" width="30" height="3" fill="#efe6cc"/>
<rect x="306" y="249" width="13" height="28" rx="3" fill="#35322e"/>
<circle cx="312.800" cy="247.300" r="3.600" fill="#2b2724"/>
<path d="M309 252l-6-3" stroke="#35322e" stroke-width="2.200"/>
<circle cx="302.700" cy="249.800" r="1.100" fill="#e8c040"/>
<path d="M252 242h6.500v30l11 6v21h-17.500z" fill="#c25e3c"/>
<path d="M256 276l5-3 8 5 1 21h-11z" fill="#dc8c6a"/>
<ellipse cx="261.500" cy="275" rx="4.500" ry="2.600" fill="#9c9c9a"/>
<path d="M270 286l22-2.500 5 15.500h-27z" fill="#ececec"/>
<path d="M275 299c2-9 10-13 18-11l6 11z" fill="#3c3c3a"/>
<rect x="297" y="280" width="14" height="12" fill="#d8c480"/>
<rect x="309" y="286" width="10" height="13" fill="#6a4424"/>
</g>
<rect x="65" y="264" width="17" height="17" fill="#0ba1d8"/>
<text x="73.500" y="275.300" font-size="8" font-weight="700" text-anchor="middle" fill="#fff" font-family="Liberation Sans,sans-serif" letter-spacing="-0.300">03</text>
<text x="95" y="264.400" font-size="5.600" font-weight="900" fill="#111" textLength="25.500" font-family="Liberation Sans,Noto Sans CJK SC,sans-serif">添加标题</text>
<g font-size="3.700" fill="#222" font-family="Liberation Sans,Noto Sans CJK SC,sans-serif" font-weight="700">
<text x="95" y="246.200" textLength="59">点击此处添加标题点击此处添加</text>
<text x="95" y="273" textLength="89">点击此处添加标题点击此处添加标题添加标题</text>
<text x="95" y="280" textLength="89">添加标题点击此处添加标题点击此处添加添加</text>
<text x="95" y="288.100" textLength="59">标题添加标题点击此处添加标</text>
</g>
</svg></div>
<div class="thumb" style="top:349px;height:198px">
<svg style="left:0;top:0" width="348" height="196" viewBox="45 350 348 196">
<defs><linearGradient id="gA" x1="0" y1="0" x2="0" y2="1"><stop offset="0" stop-color="#c6d4a0"/><stop offset="1" stop-color="#fafcf4"/></linearGradient>
<linearGradient id="gS" x1="0" y1="0" x2="1" y2="0"><stop offset="0" stop-color="#8e8e86"/><stop offset="0.120" stop-color="#8e8e86"/><stop offset="0.130" stop-color="#a8943e"/><stop offset="0.380" stop-color="#8c7a30"/><stop offset="0.420" stop-color="#a07040"/><stop offset="0.540" stop-color="#9c6e3c"/><stop offset="0.560" stop-color="#5a5a50"/><stop offset="0.660" stop-color="#55402a"/><stop offset="1" stop-color="#6a4420"/></linearGradient></defs>
<rect x="87.500" y="362" width="86" height="25.500" fill="#9a9a9a" opacity="0.350"/>
<rect x="86.800" y="361" width="86.200" height="25.200" fill="#0b70c1"/>
<text x="90.500" y="381.300" font-size="19" font-weight="900" font-style="italic" fill="#fff" font-family="Liberation Sans,Noto Sans CJK SC,sans-serif" textLength="75">案例背景</text>
<rect x="127" y="398" width="187" height="101.300" fill="#c0c0c0"/>
<text x="220" y="408.700" font-size="7.600" font-weight="700" text-anchor="middle" fill="#222" font-family="Liberation Sans,Noto Sans CJK SC,sans-serif" letter-spacing="0">FoldRite的市场</text>
<path d="M140.2 448.9v10.5a52.4 25.3 0 0 0 104.8 0v-10.5z" fill="url(#gS)"/>
<path d="M192.6 448.9L192.60 423.60A52.4 25.3 0 1 1 151.88 464.82z" fill="#cdb865"/>
<path d="M192.6 448.9L151.88 464.82A52.4 25.3 0 0 1 169.63 426.16z" fill="#a2b585"/>
<path d="M192.6 448.9L169.63 426.16A52.4 25.3 0 0 1 192.60 423.60z" fill="#85bfdd"/>
<g font-size="6.300" fill="#333" font-family="Liberation Sans,Noto Sans CJK SC,sans-serif"><text x="222" y="457">62%</text><text x="148.500" y="445">29%</text><text x="181.500" y="433.500">9%</text></g>
<rect x="260.800" y="443.9" width="2.600" height="2.600" fill="#cdb865"/>
<text x="265.500" y="446.8" font-size="4.600" fill="#2a2a2a" font-family="Liberation Sans,Noto Sans CJK SC,sans-serif">餐饮市场</text>
<rect x="260.800" y="453.6" width="2.600" height="2.600" fill="#a2b585"/>
<text x="265.500" y="456.5" font-size="4.600" fill="#2a2a2a" font-family="Liberation Sans,Noto Sans CJK SC,sans-serif">公司、政府、学校等</text>
<rect x="260.800" y="463.3" width="2.600" height="2.600" fill="#85bfdd"/>
<text x="265.500" y="466.2" font-size="4.600" fill="#2a2a2a" font-family="Liberation Sans,Noto Sans CJK SC,sans-serif">个体消费者</text>
<path d="M140 546c18-4 30-12 36-25.500h82c6 13.500 18 21.500 38 25.500z" fill="url(#gA)"/>
<path d="M158.800 520.500l58.200-12.500 58.300 12.500z" fill="#a9a945"/>
<path d="M217 508.500v37.500" stroke="#d8e2b8" stroke-width="0.600"/>
<text x="216.300" y="519.600" font-size="8.900" text-anchor="middle" fill="#222" font-family="Liberation Sans,Noto Sans CJK SC,sans-serif" font-weight="500">绿色产品不断升温</text>
<text x="218.800" y="540.200" font-size="8.900" text-anchor="middle" fill="#222" font-family="Liberation Sans,Noto Sans CJK SC,sans-serif" font-weight="500">折叠椅夏季需求量大</text>
<path d="M45 546v-11l24-4.500 56 15.500z" fill="#a39a3c"/>
<path d="M70 531l52 15h-14z" fill="#1d1d1b"/>
<path d="M64 535l5-3 4 2-2 4-3-1-1 3-3-2z" fill="#a8442c" opacity="0.800"/>
<path d="M45 546v-6l40 6z" fill="#c4b858"/>
</svg></div>
<div class="abs" style="left:42px;top:574px;width:354px;height:202px;background:#fff;border:3px solid #d24726"></div>
<div class="thumb" style="top:803px;height:90px">
<svg style="left:0;top:0" width="348" height="80" viewBox="45 804 348 80">
<clipPath id="cl24"><rect x="46" y="804" width="30" height="40"/></clipPath><circle cx="52.300" cy="823.600" r="6.600" fill="#0ba1d8" clip-path="url(#cl24)"/>
<path d="M46 805.200h16c-0.400 5.500-1.800 9.500-4.400 12.500l-4.600 3.300-7-0.300z" fill="#0b70c1"/>
<circle cx="64" cy="810" r="1.900" fill="#0ba1d8"/>
<text x="63.200" y="825.300" font-size="11" font-weight="900" fill="#1a1a1a" font-family="Liberation Sans,Noto Sans CJK SC,sans-serif" textLength="44.500">案例背景</text>
<text x="63.200" y="833.700" font-size="4.600" fill="#1a1a1a" font-family="Liberation Sans,Noto Sans CJK SC,sans-serif" textLength="44" font-weight="400">CASE BACKGROUND</text>
<g font-size="6.800" font-weight="700" fill="#1a1a1a" text-anchor="middle" font-family="Liberation Serif,Noto Serif CJK SC,serif"><text x="122.600" y="853.200">餐饮市场</text><text x="218.600" y="853.200">公司、政府、学校等</text><text x="315" y="853.200">个体消费者</text></g>
<circle cx="122.6" cy="906.8" r="47" fill="#f1f1f1"/>
<path d="M122.6 906.8V871.00A35.8 35.8 0 0 0 90.99 889.99z" fill="#0b70c1"/>
<circle cx="218.6" cy="906.8" r="47" fill="#f1f1f1"/>
<path d="M218.6 906.8V871.00A35.8 35.8 0 0 0 190.39 884.76z" fill="#0ba1d8"/>
<circle cx="315" cy="906.8" r="47" fill="#f1f1f1"/>
<path d="M315 906.8V871.00A35.8 35.8 0 0 0 297.10 875.80z" fill="#0ba1d8"/>
</svg></div>

</div></div>
<div id="main"><div class="pg" style="left:-453px;top:-243px">
<div class="abs" style="left:814px;top:388px;width:629px;height:355px;background:#fff;border:1px solid #c6c6c6"></div>
<div class="strack" style="left:1801px;top:244px;height:564px"></div>
<div class="sbtn" style="left:1801px;top:244px;height:25px"></div>
<svg style="left:1808px;top:253px" width="12" height="6" viewBox="0 0 12 6"><path d="M0 6l5.700-6 5.700 6z" fill="#777"/></svg>
<div class="sbtn" style="left:1801px;top:519px;height:26px;border-color:#ababab"></div>
<div class="sbtn" style="left:1801px;top:784px"></div>
<svg style="left:1808px;top:793px" width="12" height="6" viewBox="0 0 12 6"><path d="M0 0l5.700 6 5.700-6z" fill="#777"/></svg>
<svg style="left:1808px;top:815px" width="12" height="12" viewBox="0 0 12 12"><path d="M0 6l5.700-6 5.700 6zM0 12l5.700-6 5.700 6z" fill="#777"/></svg>
<svg style="left:1808px;top:842px" width="12" height="12" viewBox="0 0 12 12"><path d="M0 0l5.700 6 5.700-6zM0 6l5.700 6 5.700-6z" fill="#777"/></svg>

</div></div>
<svg style="left:1612px;top:854px" width="22" height="28" viewBox="1612 854 22 28"><path d="M1614.600 856.500v24.500l5-5.500 3.500 8 4-1.500-3.200-7.500 7.300-0.300z" fill="#fff" stroke="#222" stroke-width="1.300" stroke-linejoin="miter"/></svg>

</body>
</html>
